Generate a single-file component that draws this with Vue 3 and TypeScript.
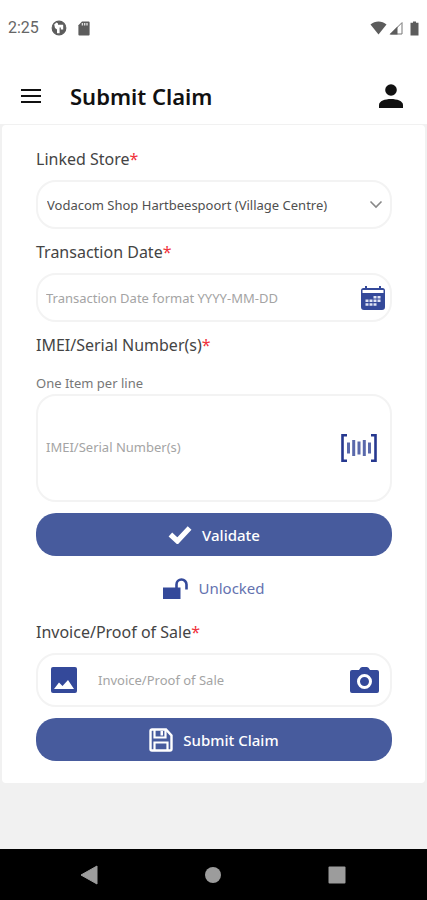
<script setup lang="ts">
import { ref } from 'vue'

const stores: string[] = ['Vodacom Shop Hartbeespoort (Village Centre)']
const store = ref(stores[0])
const transactionDate = ref('')
const serials = ref('')
const invoice = ref('')
</script>

<template>
  <div class="screen">
    <div class="status">
      <span class="clock">2:25</span>
      <svg class="status-app" viewBox="0 0 16 16" aria-hidden="true">
        <circle cx="8" cy="8" r="6.8" fill="#5c5c5c" stroke="#5c5c5c" stroke-width="1.2" />
        <path d="M3.200 4.500 5.500 2.600 7 3.600v1.200h5.200v4.600H9.800V7.600H8.600v5.600H6V9.500L4 8z" fill="#fff" />
      </svg>
      <svg class="status-card" viewBox="0 0 12 15" aria-hidden="true">
        <path d="M4 .5h6.6a1 1 0 0 1 1 1v12a1 1 0 0 1-1 1H1.400a1 1 0 0 1-1-1V4.200z" fill="#5c5c5c" />
        <path d="M4.400 2v2.600M6.700 2v2.600M9 2v2.600" stroke="#ddd" stroke-width="1.400" />
      </svg>
      <svg class="status-wifi" viewBox="0 0 17 14" aria-hidden="true">
        <path d="M.5 3.500C5-.6 12-.6 16.500 3.500L8.500 13.500z" fill="#5c5c5c" />
      </svg>
      <svg class="status-signal" viewBox="0 0 14 14" aria-hidden="true">
        <path d="M1.600 13 13 1.600V13z" fill="#fff" stroke="#777" stroke-width="1" />
        <path d="M.5 13.500 8.500 5.500v8z" fill="#5c5c5c" />
      </svg>
      <svg class="status-battery" viewBox="0 0 9 15" aria-hidden="true">
        <path d="M3 .5h3v1.300h2.500v12.700h-8V1.800H3z" fill="#5c5c5c" />
      </svg>
    </div>

    <header class="bar">
      <button class="icon-button" type="button" aria-label="Menu">
        <svg class="menu" viewBox="0 0 20 14" aria-hidden="true">
          <path d="M0 1h20M0 7h20M0 13h20" stroke="#111" stroke-width="2" />
        </svg>
      </button>
      <h1>Submit Claim</h1>
      <button class="icon-button" type="button" aria-label="Profile">
        <svg class="person" viewBox="0 0 24 24" aria-hidden="true">
          <circle cx="12" cy="6" r="5.800" fill="#111" />
          <path d="M0 24v-3c0-4 6-6 12-6s12 2 12 6v3z" fill="#111" />
        </svg>
      </button>
    </header>

    <main>
      <form class="card" @submit.prevent>
        <label class="label" for="store">Linked Store<span class="star">*</span></label>
        <div class="field select">
          <select id="store" v-model="store">
            <option v-for="name in stores" :key="name">{{ name }}</option>
          </select>
          <svg class="chevron" viewBox="0 0 14 9" aria-hidden="true">
            <path d="m1.500 1.500 5.500 5.500 5.500-5.500" fill="none" stroke="#888" stroke-width="1.600" />
          </svg>
        </div>

        <label class="label" for="date">Transaction Date<span class="star">*</span></label>
        <div class="field date">
          <input id="date" v-model="transactionDate" type="text" placeholder="Transaction Date format YYYY-MM-DD">
          <button class="icon-button" type="button" aria-label="Pick a date">
            <svg class="calendar" viewBox="0 0 24 24" aria-hidden="true">
              <path d="M2.500 2h19A2.500 2.500 0 0 1 24 4.500v16.500a3 3 0 0 1-3 3H3a3 3 0 0 1-3-3V4.500A2.500 2.500 0 0 1 2.500 2z" fill="#34499a" />
              <path d="M1.500 4h21v3h-21z" fill="#fff" />
              <path d="M5 0v4M19 0v4" stroke="#34499a" stroke-width="2" />
              <path d="M12.500 10h3v2.500h-3zM16.500 10h3v2.500h-3zM8.500 13.500h3V16h-3zM12.500 13.500h3V16h-3zM16.500 13.500h3V16h-3zM4.500 13.500h3V16h-3zM4.500 17.200h3v2.500h-3zM8.500 17.200h3v2.500h-3zM12.500 17.200h3v2.500h-3z" fill="#dfe4f4" />
            </svg>
          </button>
        </div>

        <label class="label" for="serials">IMEI/Serial Number(s)<span class="star">*</span></label>
        <p class="hint">One Item per line</p>
        <div class="field serials">
          <textarea id="serials" v-model="serials" placeholder="IMEI/Serial Number(s)"></textarea>
          <button class="icon-button" type="button" aria-label="Scan barcode">
            <svg class="barcode" viewBox="0 0 36 28" aria-hidden="true">
              <path d="M6 1.300H1.500v25.400H6M30 1.300h4.500v25.400H30" fill="none" stroke="#26388f" stroke-width="2.600" />
              <path d="M7.500 8.500v11M12.700 6v16M18 7.500v13M23.300 6v16M28.500 8.500v11" stroke="#5a69ab" stroke-width="3" />
            </svg>
          </button>
        </div>

        <button class="primary" type="button">
          <svg class="check" viewBox="0 0 24 19" aria-hidden="true">
            <path d="m2.400 9.500 7 6.500L21.600 3" fill="none" stroke="#fff" stroke-width="5.200" />
          </svg>
          Validate
        </button>

        <button class="lock" type="button">
          <svg class="padlock" viewBox="0 0 25 21" aria-hidden="true">
            <path d="M0 9.500h17.500V21H0z" fill="#34499a" />
            <path d="M13.500 10V6.500a5 5 0 0 1 10 0v5" fill="none" stroke="#34499a" stroke-width="2.600" />
          </svg>
          Unlocked
        </button>

        <label class="label" for="invoice">Invoice/Proof of Sale<span class="star">*</span></label>
        <div class="field invoice">
          <button class="icon-button" type="button" aria-label="Choose picture">
            <svg class="picture" viewBox="0 0 26 26" aria-hidden="true">
              <rect width="26" height="26" rx="2" fill="#34499a" />
              <path d="m3 22 5-6.500 3.500 3.500L17 13l6 9z" fill="#fff" />
            </svg>
          </button>
          <input id="invoice" v-model="invoice" type="text" placeholder="Invoice/Proof of Sale">
          <button class="icon-button" type="button" aria-label="Take photo">
            <svg class="camera" viewBox="0 0 29 26" aria-hidden="true">
              <path d="M2 3h7l1.500-2.300L12 0h5l1.500.7L20 3h7a2 2 0 0 1 2 2v19a2 2 0 0 1-2 2H2a2 2 0 0 1-2-2V5a2 2 0 0 1 2-2z" fill="#34499a" />
              <circle cx="14.500" cy="14.500" r="6" fill="none" stroke="#fff" stroke-width="3" />
            </svg>
          </button>
        </div>

        <button class="primary submit" type="submit">
          <svg class="disk" viewBox="0 0 24 24" aria-hidden="true">
            <path d="M3 1.500h14l5.500 6V21A1.500 1.500 0 0 1 21 22.500H3A1.500 1.500 0 0 1 1.500 21V3A1.500 1.500 0 0 1 3 1.500z" fill="none" stroke="#fff" stroke-width="2.400" />
            <path d="M5.500 2v7.500h11V2M5.500 22v-7.500h13V22" fill="none" stroke="#fff" stroke-width="2.200" />
            <path d="M11.500 3h2.500v4.500h-2.500z" fill="#fff" />
          </svg>
          Submit Claim
        </button>
      </form>
    </main>

    <nav class="system">
      <button class="icon-button" type="button" aria-label="Back">
        <svg viewBox="0 0 18 20" class="back" aria-hidden="true"><path d="M1 10 17 1v18z" fill="#9c9c9c" stroke="#9c9c9c" stroke-linejoin="round" /></svg>
      </button>
      <button class="icon-button" type="button" aria-label="Home">
        <svg viewBox="0 0 18 18" class="home" aria-hidden="true"><circle cx="9" cy="9" r="8" fill="#9c9c9c" /></svg>
      </button>
      <button class="icon-button" type="button" aria-label="Recent apps">
        <svg viewBox="0 0 18 18" class="recent" aria-hidden="true"><rect x=".5" y=".5" width="17" height="17" rx="1" fill="#9c9c9c" /></svg>
      </button>
    </nav>
  </div>
</template>

<style>
body {
  margin: 0;
}
</style>

<style scoped>
* {
  box-sizing: border-box;
}

.screen {
  display: flex;
  flex-direction: column;
  min-height: 100vh;
  background: #f1f1f1;
  color: #505050;
  font-family: "Noto Sans", sans-serif;
}

svg {
  display: block;
  flex: none;
}

button,
input,
select,
textarea {
  border: 0;
  padding: 0;
  background: none;
  color: inherit;
  font: inherit;
}

.icon-button {
  flex: none;
  cursor: pointer;
}

.status {
  display: flex;
  align-items: center;
  height: 56px;
  padding: 0 8px;
  background: #fff;
}

.clock {
  color: #666;
  font-family: Roboto, sans-serif;
  font-size: 16px;
  line-height: 20px;
}

.status-app {
  width: 16px;
  height: 16px;
  margin-left: 12px;
}

.status-card {
  width: 12px;
  height: 15px;
  margin-left: 11px;
}

.status-wifi {
  width: 17px;
  height: 14px;
  margin-left: auto;
}

.status-signal {
  width: 14px;
  height: 14px;
  margin-left: 2px;
}

.status-battery {
  width: 9px;
  height: 15px;
  margin-left: 7px;
}

.bar {
  display: flex;
  align-items: center;
  height: 69px;
  padding: 12px 24px 0 21px;
  border-bottom: 1px solid #f1f1f1;
  background: #fff;
}

.bar h1 {
  flex: 1;
  margin: 0 0 0 29px;
  color: #111;
  font-size: 22px;
  font-weight: 600;
  line-height: 30px;
}

.menu {
  width: 20px;
  height: 14px;
}

.person {
  width: 24px;
  height: 24px;
}

main {
  flex: 1;
  padding: 0 2px;
}

.card {
  display: flex;
  flex-direction: column;
  padding: 22px 33px 22px 34px;
  border-radius: 4px;
  background: #fff;
}

.label {
  margin-bottom: 9px;
  color: #444;
  font-size: 16px;
  line-height: 24px;
}

.star {
  color: #f0323c;
}

.field {
  display: flex;
  align-items: center;
  height: 49px;
  margin-bottom: 11px;
  border: 2px solid #f3f3f3;
  border-radius: 20px;
  font-size: 13px;
}

.field input {
  flex: 1;
  min-width: 0;
  height: 100%;
}

.field ::placeholder {
  color: #a4a4a4;
  opacity: 1;
}

.select {
  display: grid;
}

.select select {
  grid-area: 1 / 1;
  width: 100%;
  height: 100%;
  padding: 0 32px 0 9px;
  border-radius: 18px;
  appearance: none;
}

.chevron {
  grid-area: 1 / 1;
  justify-self: end;
  width: 14px;
  height: 9px;
  margin-right: 7px;
  pointer-events: none;
}

.date {
  padding: 0 5px 0 8px;
}

.calendar {
  width: 24px;
  height: 24px;
}

.hint {
  margin: 6px 0 0;
  color: #777;
  font-size: 13px;
  line-height: 22px;
}

.serials {
  height: 108px;
  padding: 0 13px 0 8px;
}

.serials textarea {
  flex: 1;
  min-width: 0;
  height: 100%;
  padding: 41px 0;
  line-height: 20px;
  resize: none;
}

.barcode {
  width: 36px;
  height: 28px;
}

.primary {
  display: flex;
  align-items: center;
  justify-content: center;
  gap: 10px;
  height: 43px;
  border-radius: 20px;
  background: #475b9d;
  color: #fff;
  font-size: 15px;
  font-weight: 500;
  cursor: pointer;
}

.check {
  width: 24px;
  height: 19px;
}

.lock {
  display: flex;
  align-items: center;
  align-self: center;
  gap: 10px;
  height: 44px;
  margin: 10px 0;
  color: #6472b0;
  font-size: 15px;
  cursor: pointer;
}

.padlock {
  width: 25px;
  height: 21px;
}

.invoice {
  height: 54px;
  padding: 0 11px 0 13px;
}

.invoice input {
  margin: 0 16px 0 21px;
}

.picture {
  width: 26px;
  height: 26px;
}

.camera {
  width: 29px;
  height: 26px;
}

.disk {
  width: 24px;
  height: 24px;
}

.system {
  display: flex;
  align-items: center;
  justify-content: space-between;
  height: 51px;
  padding: 0 81px 0 80px;
  background: #000;
}

.back {
  width: 18px;
  height: 20px;
}

.home,
.recent {
  width: 18px;
  height: 18px;
}
</style>
